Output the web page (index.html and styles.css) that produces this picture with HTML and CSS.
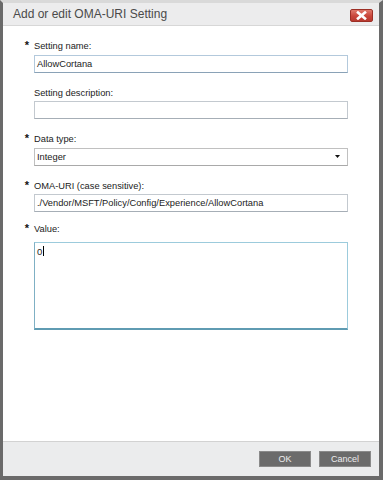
FILE: index.html
```html
<!DOCTYPE html>
<html>
<head>
<meta charset="utf-8">
<link rel="stylesheet" href="styles.css">
</head>
<body>
<div class="frame">
  <div class="titlebar">
    <span class="title">Add or edit OMA-URI Setting</span>
    <span class="close"><svg width="11" height="9" viewBox="0 0 11 9"><path d="M2 1.5 L9 7.5 M9 1.5 L2 7.5" stroke="#fff" stroke-width="2.6" stroke-linecap="square"/></svg></span>
  </div>
  <div class="content">
    <div class="field f1">
      <span class="req">*</span>
      <label class="lbl">Setting name:</label>
      <div class="input">AllowCortana</div>
    </div>
    <div class="field f2">
      <span class="req"></span>
      <label class="lbl">Setting description:</label>
      <div class="input plain"></div>
    </div>
    <div class="field f3">
      <span class="req">*</span>
      <label class="lbl">Data type:</label>
      <div class="select"><span>Integer</span><svg width="5" height="3" viewBox="0 0 5 3"><path d="M0 0 H5 L2.5 3 Z" fill="#111"/></svg></div>
    </div>
    <div class="field f4">
      <span class="req">*</span>
      <label class="lbl">OMA-URI (case sensitive):</label>
      <div class="input plain">./Vendor/MSFT/Policy/Config/Experience/AllowCortana</div>
    </div>
    <div class="field f5">
      <span class="req">*</span>
      <label class="lbl">Value:</label>
      <div class="textarea"><span>0</span><span class="caret"></span></div>
    </div>
  </div>
  <div class="footer">
    <button class="btn">OK</button>
    <button class="btn">Cancel</button>
  </div>
</div>
</body>
</html>
```
FILE: styles.css
```css
html, body { margin: 0; padding: 0; }
body {
  background: #dedede;
  font-family: "Liberation Sans", Arial, sans-serif;
}
.frame {
  width: 383px;
  height: 480px;
  box-sizing: border-box;
  border-top: 3px solid #d9d9d9;
  border-left: 3px solid #6a6a6a;
  border-right: 4px solid #6a6a6a;
  border-bottom: 4px solid #6a6a6a;
  display: flex;
  flex-direction: column;
  background: #fff;
}
.titlebar {
  height: 22px;
  background: #ececed;
  border-bottom: 1px solid #d7d7d7;
  display: flex;
  align-items: center;
  justify-content: space-between;
  padding: 0 6px 0 10px;
  flex-shrink: 0;
}
.title {
  font-family: "Liberation Sans", Arial, sans-serif;
  font-size: 12px;
  color: #4a4a4a;
  margin-top: -1px;
}
.close {
  width: 21px;
  height: 11px;
  border: 1px solid #9c2f26;
  border-radius: 2px;
  background: linear-gradient(#e07a6c, #c9453a 55%, #b83a30);
  display: flex;
  align-items: center;
  justify-content: center;
  margin-top: 2px;
}
.content {
  flex: 1;
  background: #fff;
  display: flex;
  flex-direction: column;
}
.field {
  display: grid;
  grid-template-columns: 31px 314px;
  margin-top: 14px;
}
.req {
  grid-row: 1;
  grid-column: 1;
  justify-self: end;
  margin-right: 5px;
  font-size: 11px;
  font-weight: bold;
  line-height: 11px;
  color: #111;
}
.lbl {
  grid-row: 1;
  grid-column: 2;
  font-size: 9.3px;
  line-height: 13px;
  color: #222;
}
.f5 { margin-top: 11px; }
.input, .select, .textarea {
  grid-column: 2;
  box-sizing: border-box;
  font-size: 9.3px;
  color: #222;
  background: #fff;
}
.input {
  height: 18px;
  margin-top: 2px;
  border: 1px solid #b3c9dc;
  border-bottom-color: #8aa2b7;
  padding: 0 2px;
  line-height: 16px;
}
.input.plain {
  border-color: #c3c9cf;
  border-bottom-color: #a6aeb6;
}
.f2 .input, .f4 .input { margin-top: 1px; }
.select {
  height: 18px;
  margin-top: 2px;
  border: 1px solid #c0c0c0;
  border-bottom-color: #a9a9a9;
  padding: 0 7px 1px 2px;
  display: flex;
  align-items: center;
  justify-content: space-between;
}
.textarea {
  height: 88px;
  margin-top: 6px;
  border: 1px solid #9ccbdc;
  border-bottom: 2px solid #5f9bb2;
  border-left-color: #7fb0c4;
  padding: 3px 2px;
  line-height: 11px;
  font-size: 9.5px;
  display: flex;
  align-items: flex-start;
}
.caret {
  display: inline-block;
  width: 1px;
  height: 10px;
  background: #000;
  margin-left: 1px;
  margin-top: 0px;
}
.footer {
  height: 35px;
  box-sizing: border-box;
  background: #ebeced;
  border-top: 1px solid #d2d2d2;
  display: flex;
  justify-content: flex-end;
  gap: 8px;
  padding: 9px 8px 0 0;
  flex-shrink: 0;
}
.btn {
  width: 52px;
  height: 16px;
  box-sizing: border-box;
  background: #6b6b6b;
  border: 1px solid #8a8a8a;
  color: #ededed;
  font-family: "Liberation Sans", Arial, sans-serif;
  font-size: 9px;
  padding: 0;
  line-height: 14px;
}
```
